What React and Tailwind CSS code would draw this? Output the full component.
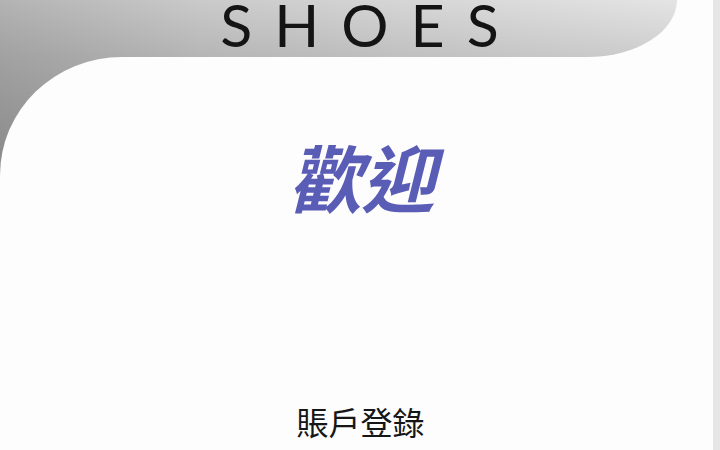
export default function App() {
  return (
    <div className="w-[720px] h-[450px] overflow-hidden bg-[#fdfdfd] flex">
      <div className="flex-1 flex flex-col">
        <div className="h-[57px] w-[677px] rounded-br-[90px_57px] bg-[linear-gradient(to_bottom,rgba(0,0,0,0)_0%,rgba(0,0,0,0.1)_100%),linear-gradient(to_right,#b3b3b3_0%,#cacaca_30%,#d6d6d6_60%,#e4e4e4_100%)] flex items-start justify-center pr-[8px]">
          <span
            className="text-[59px] leading-[49px] tracking-[22px] text-[#141414] translate-x-[36px]"
            style={{ fontFamily: '"Lato", "DejaVu Sans", sans-serif', fontWeight: 400 }}
          >
            SHOES
          </span>
        </div>
        <div className="flex-1 bg-[linear-gradient(to_bottom,rgba(0,0,0,0)_0px,rgba(0,0,0,0.16)_120px),linear-gradient(to_right,#a1a1a1_0px,#adadad_120px)]">
          <div className="h-full bg-[#fdfdfd] rounded-tl-[122px_118px] flex flex-col items-center">
            <div
              className="mt-[82px] text-[73px] leading-none italic font-bold text-[#5a5db5] translate-x-[5px]"
              style={{ fontFamily: '"Noto Sans CJK TC", "Noto Sans CJK SC", sans-serif' }}
            >
              歡迎
            </div>
            <div
              className="mt-[193px] text-[32px] leading-none text-[#161616] translate-x-[4px]"
              style={{ fontFamily: '"Noto Sans CJK TC", "Noto Sans CJK SC", sans-serif' }}
            >
              賬戶登錄
            </div>
          </div>
        </div>
      </div>
      <div className="w-[7px] h-full bg-[#e6e6e6]"></div>
    </div>
  );
}
